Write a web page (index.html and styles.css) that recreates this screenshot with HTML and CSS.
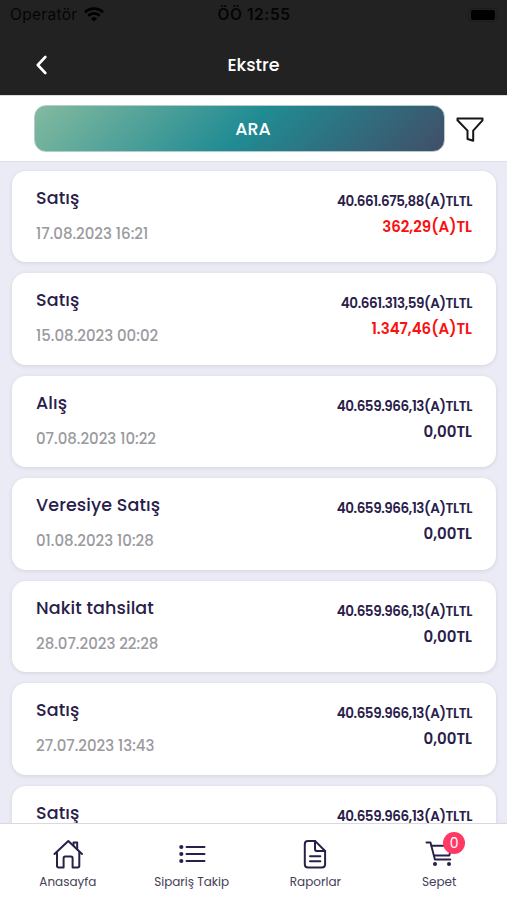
FILE: index.html
```html
<!DOCTYPE html>
<html lang="tr">
<head>
    <meta charset="UTF-8">
    <meta name="viewport" content="width=device-width, initial-scale=1.0">
    <title>Ekstre</title>
    <link rel="stylesheet" href="styles.css">
</head>
<body>
    <header>
        <div class="status-bar">
            <div class="operator">
                <span>Operatör</span>
                <svg width="20" height="15" viewBox="0 0 20 15" fill="none" stroke="#000" stroke-width="2.7">
                    <path d="M1 5.3C6 .4 14 .4 19 5.3"/>
                    <path d="M4.2 8.8c3.3-3.2 8.3-3.2 11.6 0"/>
                    <path d="M10 14.6l-3.1-3.2c1.8-1.6 4.4-1.6 6.2 0z" fill="#000" stroke="none"/>
                </svg>
            </div>
            <span class="clock">ÖÖ 12:55</span>
            <div class="battery"><div class="battery-level"></div></div>
        </div>
        <div class="title-bar">
            <a href="#" class="back">
                <svg width="12" height="20" viewBox="0 0 12 20" fill="none" stroke="#fff" stroke-width="2.6" stroke-linecap="round" stroke-linejoin="round">
                    <path d="M10.3 2L2.8 10l7.5 8"/>
                </svg>
            </a>
            <h1>Ekstre</h1>
        </div>
    </header>

    <div class="search-bar">
        <button type="button" class="search-button">ARA</button>
        <a href="#" class="filter">
            <svg width="28" height="25" viewBox="0 0 28 25" fill="none" stroke="#161616" stroke-width="2" stroke-linejoin="round">
                <path d="M1.5 1.5h25v1.8L17.2 13.6v10.1l-5.700-1.7v-8.400L1.5 3.3z"/>
            </svg>
        </a>
    </div>

    <main>
        <div class="card">
            <div class="info">
                <h2>Satış</h2>
                <p class="date">17.08.2023 16:21</p>
            </div>
            <div class="amounts">
                <p class="balance">40.661.675,88(A)TLTL</p>
                <p class="amount debt">362,29(A)TL</p>
            </div>
        </div>
        <div class="card">
            <div class="info">
                <h2>Satış</h2>
                <p class="date">15.08.2023 00:02</p>
            </div>
            <div class="amounts">
                <p class="balance">40.661.313,59(A)TLTL</p>
                <p class="amount debt">1.347,46(A)TL</p>
            </div>
        </div>
        <div class="card">
            <div class="info">
                <h2>Alış</h2>
                <p class="date">07.08.2023 10:22</p>
            </div>
            <div class="amounts">
                <p class="balance">40.659.966,13(A)TLTL</p>
                <p class="amount">0,00TL</p>
            </div>
        </div>
        <div class="card">
            <div class="info">
                <h2>Veresiye Satış</h2>
                <p class="date">01.08.2023 10:28</p>
            </div>
            <div class="amounts">
                <p class="balance">40.659.966,13(A)TLTL</p>
                <p class="amount">0,00TL</p>
            </div>
        </div>
        <div class="card">
            <div class="info">
                <h2>Nakit tahsilat</h2>
                <p class="date">28.07.2023 22:28</p>
            </div>
            <div class="amounts">
                <p class="balance">40.659.966,13(A)TLTL</p>
                <p class="amount">0,00TL</p>
            </div>
        </div>
        <div class="card">
            <div class="info">
                <h2>Satış</h2>
                <p class="date">27.07.2023 13:43</p>
            </div>
            <div class="amounts">
                <p class="balance">40.659.966,13(A)TLTL</p>
                <p class="amount">0,00TL</p>
            </div>
        </div>
        <div class="card">
            <div class="info">
                <h2>Satış</h2>
            </div>
            <div class="amounts">
                <p class="balance">40.659.966,13(A)TLTL</p>
            </div>
        </div>
    </main>

    <nav>
        <a href="#">
            <svg width="32" height="32" viewBox="0 0 32 32" fill="none" stroke="#29204a" stroke-width="2" stroke-linecap="round" stroke-linejoin="round">
                <path d="M2.5 16L16.3 3l13.7 13"/>
                <path d="M5 14.3v13.400q0 1.700 1.700 1.700h4.900V20.200q0-1.600 1.600-1.600h5.800q1.600 0 1.600 1.600v9.200h5q1.700 0 1.700-1.700V14.300"/>
                <path d="M21.5 7.3V4.4h3.7v6.8"/>
            </svg>
            <span>Anasayfa</span>
        </a>
        <a href="#">
            <svg width="32" height="32" viewBox="0 0 32 32" fill="none" stroke="#29204a" stroke-width="2" stroke-linecap="round">
                <path d="M10.5 9h18M10.5 16h18M10.5 23h18"/>
                <g fill="#29204a" stroke="none">
                    <circle cx="5.3" cy="9" r="2.1"/>
                    <circle cx="5.3" cy="16" r="2.1"/>
                    <circle cx="5.3" cy="23" r="2.1"/>
                </g>
            </svg>
            <span>Sipariş Takip</span>
        </a>
        <a href="#">
            <svg width="32" height="32" viewBox="0 0 32 32" fill="none" stroke="#29204a" stroke-width="2" stroke-linecap="round" stroke-linejoin="round">
                <path d="M16 2.9H9q-3.2 0-3.2 3.2v20.100q0 3.200 3.200 3.200h13.900q3.200 0 3.200-3.200V13z"/>
                <path d="M16 3v7.900q0 2.100 2.100 2.100h8"/>
                <path d="M11 18.3h10.3M11 23.3h10.3"/>
            </svg>
            <span>Raporlar</span>
        </a>
        <a href="#">
            <div class="cart">
                <svg width="32" height="32" viewBox="0 0 32 32" fill="none" stroke="#29204a" stroke-width="1.9" stroke-linecap="round" stroke-linejoin="round">
                    <path d="M3.500 4.500h4l4.400 17H27.300"/>
                    <path d="M8.400 7.700h20.300l-2.400 9.800H10.900"/>
                    <circle cx="12" cy="26" r="2" fill="#29204a" stroke="none"/>
                    <circle cx="26" cy="26" r="2" fill="#29204a" stroke="none"/>
                </svg>
                <span class="badge">0</span>
            </div>
            <span>Sepet</span>
        </a>
    </nav>
</body>
</html>
```
FILE: styles.css
```css
* {
    margin: 0;
    padding: 0;
    box-sizing: border-box;
}

body {
    font-family: 'Poppins', 'Inter', sans-serif;
    background-color: #ebebf5;
    color: #29204a;
    height: 100vh;
    display: flex;
    flex-direction: column;
    overflow: hidden;
}

a {
    color: inherit;
    text-decoration: none;
}

header {
    height: 95px;
    flex-shrink: 0;
    background-color: #222;
}

.status-bar {
    height: 29px;
    padding: 0 9px 0 10px;
    display: grid;
    grid-template-columns: 1fr auto 1fr;
    align-items: center;
    color: #050505;
    font-family: 'Inter', sans-serif;
    font-size: 15.5px;
}

.operator {
    display: flex;
    align-items: center;
    gap: 7px;
    letter-spacing: 0.3px;
}

.clock {
    font-weight: 600;
    letter-spacing: 0.6px;
}

.battery {
    justify-self: end;
    width: 30px;
    height: 14px;
    padding: 1px 2px;
    border: 1px solid #1b1b1b;
    border-radius: 4px;
}

.battery-level {
    height: 10px;
    background-color: #000;
    border-radius: 2px;
}

.title-bar {
    height: 72px;
    padding: 0 35px;
    display: grid;
    grid-template-columns: 1fr auto 1fr;
    align-items: center;
}

.back {
    display: flex;
}

h1 {
    color: #fff;
    font-size: 17.5px;
    font-weight: 500;
}

.search-bar {
    height: 67px;
    flex-shrink: 0;
    padding: 0 23px 0 34px;
    display: flex;
    align-items: center;
    justify-content: space-between;
    background-color: #fff;
    border-top: 1px solid #ddd;
    border-bottom: 1px solid #dedee6;
}

.search-button {
    width: 411px;
    height: 47px;
    padding-left: 27px;
    border: 1px solid #b5cbc9;
    border-radius: 12px;
    background: linear-gradient(135deg, #83ba9f 0%, #208b93 52%, #414e68 100%);
    color: #fff;
    font-family: inherit;
    font-size: 17.5px;
    font-weight: 500;
}

.filter {
    display: flex;
    padding-top: 2px;
}

main {
    flex: 1;
    min-height: 0;
    overflow: hidden;
    padding: 8.5px 11px 0 12px;
    display: flex;
    flex-direction: column;
    gap: 11px;
}

.card {
    height: 91.5px;
    flex-shrink: 0;
    padding: 0 24px;
    display: flex;
    justify-content: space-between;
    background-color: #fff;
    border-radius: 14px;
    box-shadow: 0 1px 4px rgba(0, 0, 0, 0.1);
}

.info {
    padding-top: 15px;
}

h2 {
    font-size: 17.5px;
    font-weight: 500;
    line-height: 24px;
    letter-spacing: 0.1px;
}

.date {
    margin-top: 12px;
    color: #9a9a9f;
    font-size: 15px;
    font-weight: 500;
    line-height: 24px;
}

.amounts {
    padding-top: 20px;
    text-align: right;
    font-weight: 600;
}

.balance {
    font-size: 13.5px;
    line-height: 22px;
    letter-spacing: -0.4px;
}

.amount {
    margin-top: 3px;
    font-size: 15px;
    line-height: 22px;
}

.debt {
    color: #fb1010;
}

nav {
    height: 77px;
    flex-shrink: 0;
    padding: 14px 6px 0;
    display: grid;
    grid-template-columns: repeat(4, 1fr);
    background-color: #fff;
    border-top: 1px solid #d9d9df;
}

nav a {
    display: flex;
    flex-direction: column;
    align-items: center;
    color: #454056;
    font-size: 12px;
    line-height: 23px;
}

nav svg {
    display: block;
}

.cart {
    position: relative;
}

.badge {
    position: absolute;
    top: -6px;
    left: 20px;
    width: 22px;
    height: 22px;
    border-radius: 50%;
    background-color: #ff3866;
    color: #fff;
    font-size: 14px;
    line-height: 22px;
    text-align: center;
}
```
